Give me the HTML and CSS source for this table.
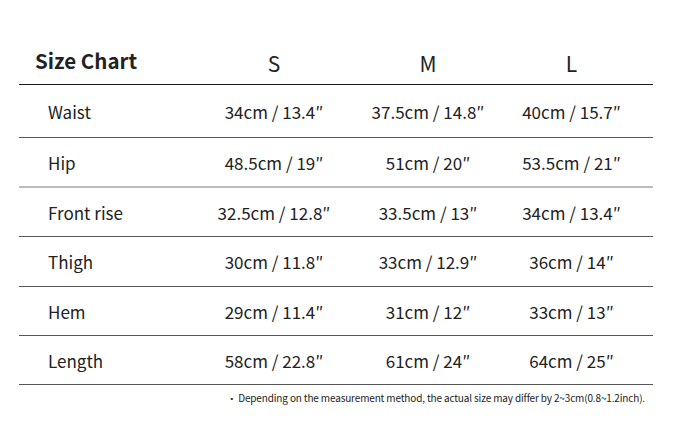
FILE: index.html
```html
<!DOCTYPE html>
<html lang="en">
<head>
<meta charset="utf-8">
<link rel="stylesheet" href="styles.css">
</head>
<body>
<div class="chart">
  <div class="row head">
    <div class="title">Size Chart</div>
    <div class="size">S</div>
    <div class="size">M</div>
    <div class="size last">L</div>
  </div>
  <div class="row first">
    <div class="label">Waist</div>
    <div class="val">34cm / 13.4″</div>
    <div class="val">37.5cm / 14.8″</div>
    <div class="val last">40cm / 15.7″</div>
  </div>
  <div class="row light">
    <div class="label">Hip</div>
    <div class="val">48.5cm / 19″</div>
    <div class="val">51cm / 20″</div>
    <div class="val last">53.5cm / 21″</div>
  </div>
  <div class="row">
    <div class="label">Front rise</div>
    <div class="val">32.5cm / 12.8″</div>
    <div class="val">33.5cm / 13″</div>
    <div class="val last">34cm / 13.4″</div>
  </div>
  <div class="row tall">
    <div class="label">Thigh</div>
    <div class="val">30cm / 11.8″</div>
    <div class="val">33cm / 12.9″</div>
    <div class="val last">36cm / 14″</div>
  </div>
  <div class="row">
    <div class="label">Hem</div>
    <div class="val">29cm / 11.4″</div>
    <div class="val">31cm / 12″</div>
    <div class="val last">33cm / 13″</div>
  </div>
  <div class="row">
    <div class="label">Length</div>
    <div class="val">58cm / 22.8″</div>
    <div class="val">61cm / 24″</div>
    <div class="val last">64cm / 25″</div>
  </div>
  <p class="note"><span class="bullet">▪</span>Depending on the measurement method, the actual size may differ by 2~3cm(0.8~1.2inch).</p>
</div>
</body>
</html>
```

FILE: styles.css
```css
html, body {
  margin: 0;
  padding: 0;
  background: #fff;
}
body {
  font-family: "Noto Sans CJK KR", "Noto Sans", sans-serif;
  color: #222;
}
.chart {
  margin-left: 19px;
  width: 634px;
}
.row {
  display: grid;
  grid-template-columns: 181px 148px 160px 145px;
  align-items: center;
  height: 48px;
  border-bottom: 1px solid #555;
  font-size: 17px;
}
.row.first {
  height: 52px;
}
.row.tall {
  height: 49px;
}
.row.light {
  border-bottom: 2px solid #bbb;
  height: 48px;
}
.row.head {
  height: 84px;
  align-items: end;
  border-bottom: 1px solid #1a1a1a;
}
.title {
  font-size: 20.5px;
  font-weight: 700;
  line-height: 24px;
  padding-left: 16px;
  padding-bottom: 12px;
}
.size {
  font-size: 21px;
  line-height: 24px;
  text-align: center;
  padding-bottom: 9px;
}
.label {
  padding-left: 29px;
}
.val {
  text-align: center;
}
.last {
  padding-right: 18px;
}
.note {
  margin: 6px 8px 0 0;
  font-size: 10px;
  line-height: 14px;
  text-align: right;
  letter-spacing: -0.15px;
}
.bullet {
  font-size: 7px;
  margin-right: 3px;
  vertical-align: 1px;
}
```
